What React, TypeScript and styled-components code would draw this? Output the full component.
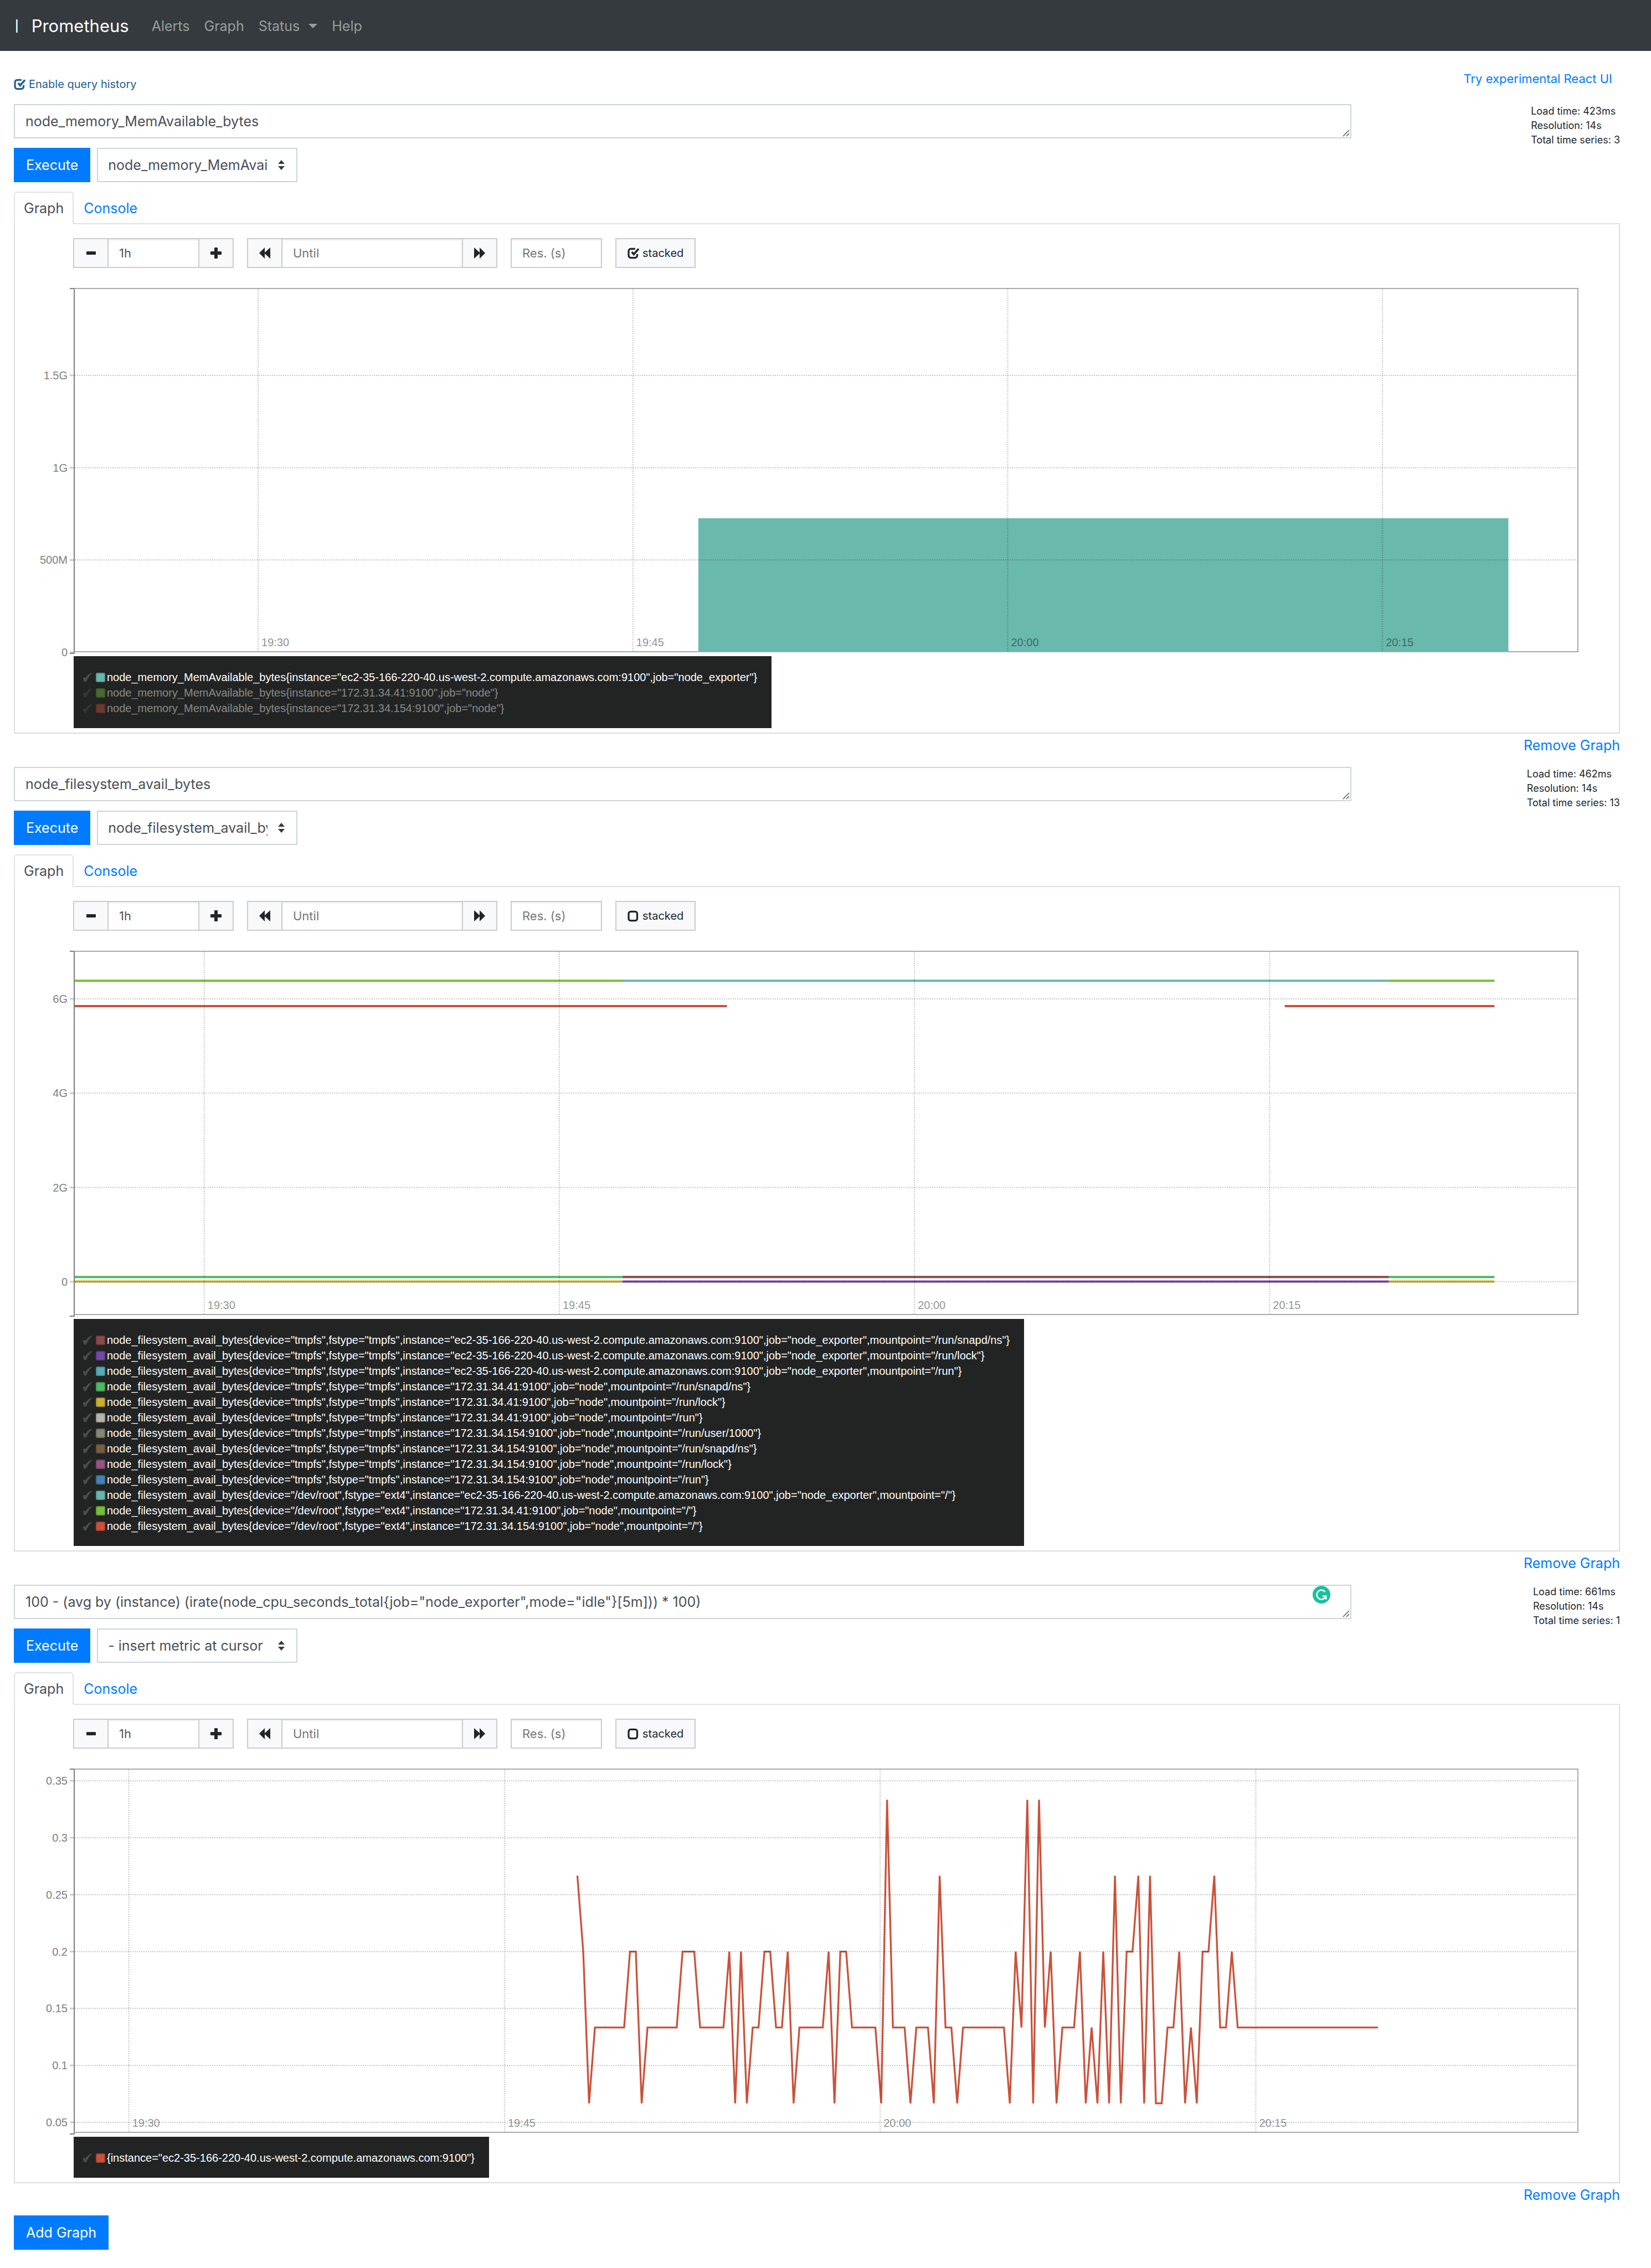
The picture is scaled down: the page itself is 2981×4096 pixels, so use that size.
import React, { useState } from "react";
import styled, { createGlobalStyle } from "styled-components";

const UI = `Inter, Roboto, "Liberation Sans", sans-serif`;
const CHART = `"Liberation Sans", Arial, sans-serif`;

const Global = createGlobalStyle`
  * { box-sizing: border-box; }
  body {
    margin: 0;
    background: #fff;
    color: #212529;
    font-family: ${UI};
    font-size: 25px;
    line-height: 38px;
  }
  button, input, select, textarea { font: inherit; border-radius: 0; margin: 0; }
  a { color: #007bff; text-decoration: none; }
`;

/* ---------- navigation ---------- */

const Navbar = styled.nav`
  display: flex;
  align-items: center;
  height: 92px;
  padding: 2px 26px 0;
  background: #343a3e;
`;

const ConsoleMark = styled.a`
  margin-right: 22px;
  color: #fff;
  font-size: 33px;
  font-weight: 300;
`;

const Brand = styled.a`
  margin-right: 28px;
  color: #fff;
  font-size: 31px;
`;

const NavLink = styled.a`
  display: flex;
  align-items: center;
  gap: 16px;
  padding: 0 13px;
  color: rgba(255, 255, 255, 0.5);
`;

const Caret = styled.span`
  border: 8px solid transparent;
  border-top-color: currentColor;
  border-bottom: 0;
`;

/* ---------- page ---------- */

const Page = styled.main`
  padding: 0 56px 34px 25px;
`;

const TopRow = styled.header`
  display: flex;
  justify-content: space-between;
  align-items: flex-start;
  height: 96px;
  padding: 32px 14px 0 0;
`;

const TopLink = styled.a`
  font-size: 22px;
  line-height: 36px;
`;

const CheckLabel = styled.label`
  position: relative;
  display: inline-flex;
  align-items: center;
  gap: 5px;
  font-size: 20px;
  line-height: 36px;
`;

const HistoryLabel = styled(CheckLabel)`
  margin-top: 10px;
  color: #22608f;
`;

const HiddenCheck = styled.input`
  position: absolute;
  inset: 0;
  opacity: 0;
`;

const GraphList = styled.div`
  display: flex;
  flex-direction: column;
  gap: 19px;
`;

const Query = styled.div`
  display: grid;
  grid-template-columns: 5fr 1fr;
  gap: 2px;
`;

const QueryForm = styled.div`
  display: flex;
  flex-direction: column;
  gap: 17px;
`;

const ExpressionBox = styled.div`
  position: relative;
  display: flex;
`;

const Expression = styled.textarea`
  flex: 1;
  height: 62px;
  padding: 10px 19px;
  border: 2px solid #ced4da;
  color: #495057;
  background: #fff;
  resize: none;
  overflow: hidden;
`;

const ResizeGrip = styled.svg`
  position: absolute;
  right: 3px;
  bottom: 3px;
`;

const WritingBadge = styled.svg`
  position: absolute;
  right: 38px;
  top: 2px;
`;

const ExecuteRow = styled.div`
  display: flex;
  gap: 12px;
`;

const PrimaryButton = styled.button`
  height: 62px;
  padding: 0 22px;
  border: 0;
  background: #007bff;
  color: #fff;
`;

const MetricPicker = styled.div`
  position: relative;
  display: flex;
  width: 362px;
`;

const MetricSelect = styled.select`
  appearance: none;
  width: 100%;
  height: 62px;
  padding: 0 52px 0 18px;
  border: 2px solid #ced4da;
  background: #fff;
  color: #495057;
`;

const SelectArrows = styled.svg`
  position: absolute;
  right: 22px;
  top: 22px;
  pointer-events: none;
`;

const Stats = styled.div`
  justify-self: end;
  font-size: 18px;
  line-height: 26px;
`;

const Tabs = styled.div`
  display: flex;
  margin-top: 17px;
  height: 59px;
  border-bottom: 2px solid #dee2e6;
`;

const Tab = styled.button<{ $active?: boolean }>`
  height: 59px;
  padding: 0 16px;
  border-style: solid;
  border-width: 2px;
  border-color: ${(p) => (p.$active ? "#dee2e6 #dee2e6 #fff" : "transparent")};
  border-radius: 6px 6px 0 0;
  background: ${(p) => (p.$active ? "#fff" : "transparent")};
  color: ${(p) => (p.$active ? "#495057" : "#007bff")};
`;

const Pane = styled.div`
  padding: 25px 73px 8px 0;
  border: 2px solid #ddd;
  border-top: 0;
`;

const Controls = styled.div`
  display: flex;
  gap: 24px;
  margin: 0 0 36px 105px;
`;

const InputGroup = styled.div`
  display: flex;
`;

const IconButton = styled.button`
  display: flex;
  align-items: center;
  justify-content: center;
  width: 64px;
  height: 54px;
  padding: 0;
  border: 2px solid #ccc;
  background: #f8f9fb;
  color: #212529;
`;

const TextInput = styled.input<{ $width: number; $grouped?: boolean }>`
  width: ${(p) => p.$width}px;
  height: 54px;
  margin: 0 ${(p) => (p.$grouped ? -2 : 0)}px;
  padding: 0 19px;
  border: 2px solid #ccc;
  box-shadow: inset 0 2px 2px rgba(0, 0, 0, 0.075);
  color: #555;
  font-size: 22px;
  &::placeholder { color: #777; opacity: 1; }
`;

const StackedLabel = styled(CheckLabel)`
  height: 54px;
  padding: 0 20px;
  border: 2px solid #ccc;
  background: #f8f9fb;
  color: #212529;
`;

const Chart = styled.div`
  display: grid;
  grid-template-columns: 106px 1fr;
`;

const AxisSvg = styled.svg`
  width: 106px;
  height: 658px;
  overflow: visible;
  font-family: ${CHART};
  font-size: 20px;
  fill: #808080;
`;

const Plot = styled.div`
  height: 658px;
  border: 2px solid #aaa;
  border-left-color: #7d7d7d;
`;

const PlotSvg = styled.svg`
  display: block;
  width: 100%;
  height: 100%;
  overflow: visible;
  font-family: ${CHART};
  font-size: 20px;
`;

const Legend = styled.ul`
  display: table;
  margin: 7px 0 0 106px;
  padding: 24px 26px 22px 16px;
  background: #222423;
  color: #fff;
  list-style: none;
  font-family: ${CHART};
  font-size: 20px;
  line-height: 28px;
`;

const LegendItem = styled.li<{ $off?: boolean }>`
  display: flex;
  align-items: center;
  height: 28px;
  white-space: nowrap;
  opacity: ${(p) => (p.$off ? 0.45 : 1)};
`;

const Tick = styled.svg`
  width: 18px;
  height: 18px;
  margin-right: 6px;
  fill: #4c4d4c;
`;

const Swatch = styled.span<{ $color: string }>`
  width: 17px;
  height: 17px;
  margin-right: 3px;
  border: 2px solid rgba(0, 0, 0, 0.18);
  border-radius: 3px;
  background: ${(p) => p.$color};
`;

const RemoveRow = styled.div`
  display: flex;
  align-items: center;
  justify-content: flex-end;
  height: 41px;
`;

const AddButton = styled(PrimaryButton)`
  margin-top: 17px;
`;

/* ---------- icons ---------- */

const CheckGlyph = ({ checked }: { checked: boolean }) => (
  <svg width="22" height="21" viewBox="0 0 27 25" fill="none" stroke="currentColor" strokeWidth="4">
    {checked ? (
      <>
        <path d="M17 2.5H7.5a5 5 0 0 0-5 5v10a5 5 0 0 0 5 5h9a5 5 0 0 0 5-5V14" />
        <path d="M9.5 9.5l4.5 5L24.5 2.5" strokeWidth="4.5" />
      </>
    ) : (
      <rect x="2.5" y="2.5" width="19" height="20" rx="4.5" />
    )}
  </svg>
);

const MinusGlyph = () => (
  <svg width="17" height="6"><rect width="17" height="6" rx="1" fill="currentColor" /></svg>
);

const PlusGlyph = () => (
  <svg width="20" height="20" fill="currentColor">
    <rect y="7" width="20" height="6" rx="1" />
    <rect x="7" width="6" height="20" rx="1" />
  </svg>
);

const SeekGlyph = ({ forward }: { forward?: boolean }) => (
  <svg width="20" height="20" viewBox="0 0 20 20" fill="currentColor">
    <path d={forward ? "M0 0l10 9V0l10 10L10 20v-9L0 20z" : "M20 0l-10 9V0L0 10l10 10v-9l10 9z"} />
  </svg>
);

const LegendTick = () => (
  <Tick viewBox="0 0 18 18">
    <path d="M1 11C1 9 4 8 5 11C8 6 12 2 18 1C13 6 9 11 7 16C6 18 3 18 2 15Z" />
  </Tick>
);

/* ---------- charts ---------- */

type Series = { color: string; from: number; to: number; value: number };
type ChartSpec = {
  span: number;
  offset: number;
  min: number;
  max: number;
  yTicks: { value: number; label: string }[];
  area?: Series;
  lines?: Series[];
  wave?: { color: string; start: number; step: number; values: number[] };
};

const X_TICKS = ["19:30", "19:45", "20:00", "20:15"];

const ChartView = ({ spec }: { spec: ChartSpec }) => {
  const x = (t: number) => ((t + spec.offset) / spec.span) * 100;
  const y = (v: number) => ((spec.max - v) / (spec.max - spec.min)) * 100;
  const px = (v: number) => 2 + (y(v) / 100) * 654;
  return (
    <Chart>
      <AxisSvg>
        {spec.yTicks.map((t) => (
          <g key={t.label}>
            <text x="95" y={px(t.value)} dy="7" textAnchor="end">{t.label}</text>
            <line x1="99" x2="106" y1={px(t.value)} y2={px(t.value)} stroke="#ccc" strokeWidth="3" />
          </g>
        ))}
        <path d="M99 1H107V660H99" fill="none" stroke="#7d7d7d" strokeWidth="2" />
      </AxisSvg>
      <Plot>
        <PlotSvg>
          {spec.area && (
            <rect
              x={`${x(spec.area.from)}%`}
              y={`${y(spec.area.value)}%`}
              width={`${x(spec.area.to) - x(spec.area.from)}%`}
              height={`${100 - y(spec.area.value)}%`}
              fill={spec.area.color}
            />
          )}
          {spec.lines?.map((s, i) => (
            <line
              key={i}
              x1={`${x(s.from)}%`}
              x2={`${x(s.to)}%`}
              y1={`${y(s.value)}%`}
              y2={`${y(s.value)}%`}
              stroke={s.color}
              strokeWidth="4"
            />
          ))}
          {spec.wave && (
            <svg width="100%" height="100%" viewBox="0 0 100 100" preserveAspectRatio="none">
              <polyline
                points={spec.wave.values
                  .map((v, i) => `${x(spec.wave!.start + i * spec.wave!.step)},${y(v)}`)
                  .join(" ")}
                fill="none"
                stroke={spec.wave.color}
                strokeWidth="3.3"
                vectorEffect="non-scaling-stroke"
              />
            </svg>
          )}
          <g stroke="#000" strokeOpacity="0.22" strokeWidth="2" strokeDasharray="2 2">
            {spec.yTicks.filter((t) => y(t.value) < 100).map((t) => (
              <line key={t.label} x1="0" x2="100%" y1={`${y(t.value)}%`} y2={`${y(t.value)}%`} />
            ))}
            {X_TICKS.map((label, i) => (
              <line key={label} x1={`${x(i * 15)}%`} x2={`${x(i * 15)}%`} y1="0" y2="100%" />
            ))}
          </g>
          {X_TICKS.map((label, i) => (
            <text key={label} x={`${x(i * 15)}%`} y="100%" dx="6" dy="-9" fill="#000" fillOpacity="0.45">
              {label}
            </text>
          ))}
        </PlotSvg>
      </Plot>
    </Chart>
  );
};

/* ---------- data ---------- */

const memoryChart: ChartSpec = {
  span: 60.14,
  offset: 7.34,
  min: 0.006,
  max: 1.968,
  yTicks: [
    { value: 1.5, label: "1.5G" },
    { value: 1, label: "1G" },
    { value: 0.5, label: "500M" },
    { value: 0, label: "0" },
  ],
  area: { color: "#69b9ad", from: 17.62, to: 50.04, value: 0.726 },
};

const diskChart: ChartSpec = {
  span: 63.47,
  offset: 5.47,
  min: -0.683,
  max: 6.997,
  yTicks: [
    { value: 6, label: "6G" },
    { value: 4, label: "4G" },
    { value: 2, label: "2G" },
    { value: 0, label: "0" },
  ],
  lines: [
    { color: "#73c03a", from: -5.47, to: 17.67, value: 6.383 },
    { color: "#65b9ac", from: 17.67, to: 50.04, value: 6.383 },
    { color: "#73c03a", from: 50.04, to: 54.5, value: 6.383 },
    { color: "#cb513a", from: -5.47, to: 22.08, value: 5.845 },
    { color: "#cb513a", from: 45.64, to: 54.5, value: 5.845 },
    { color: "#4cb963", from: -5.47, to: 17.67, value: 0.1 },
    { color: "#8a4a4d", from: 17.67, to: 50.04, value: 0.1 },
    { color: "#4cb963", from: 50.04, to: 54.5, value: 0.1 },
    { color: "#cbb034", from: -5.47, to: 17.67, value: 0.005 },
    { color: "#7349a8", from: 17.67, to: 50.04, value: 0.005 },
    { color: "#cbb034", from: 50.04, to: 54.5, value: 0.005 },
  ],
};

const LEVELS: Record<string, number> = {
  D: 1 / 15,
  C: 2 / 15,
  B: 3 / 15,
  A: 4 / 15,
  E: 5 / 15,
};

const CPU_SAMPLES = [
  "ABDCCCCCCBBD",
  "CCCCCCBBBCCCCC",
  "BDBDCCBBCCBD",
  "CCCCCBDBBCCCCC",
  "DECCCDCCCDACCD",
  "CCCCCCCC",
  "DBCEDECBDCCCBDCDBDAD",
  "BBADADDCCBDCDBBACCB",
  "C".repeat(25),
].join("");

const cpuChart: ChartSpec = {
  span: 60,
  offset: 2.16,
  min: 0.0417,
  max: 0.3598,
  yTicks: [0.35, 0.3, 0.25, 0.2, 0.15, 0.1, 0.05].map((value) => ({ value, label: String(value) })),
  wave: {
    color: "#cb513a",
    start: 17.91,
    step: 14 / 60,
    values: CPU_SAMPLES.split("").map((c) => LEVELS[c]),
  },
};

type LegendEntry = { color: string; text: string; off?: boolean };
type GraphSpec = {
  id: string;
  expression: string;
  metric: string;
  stats: string[];
  stacked: boolean;
  badge?: boolean;
  chart: ChartSpec;
  legend: LegendEntry[];
};

const EC2 = "ec2-35-166-220-40.us-west-2.compute.amazonaws.com:9100";
const mem = (instance: string, job: string) =>
  `node_memory_MemAvailable_bytes{instance="${instance}",job="${job}"}`;
const fs = (device: string, type: string, instance: string, job: string, mount: string) =>
  `node_filesystem_avail_bytes{device="${device}",fstype="${type}",instance="${instance}",job="${job}",mountpoint="${mount}"}`;

const GRAPHS: GraphSpec[] = [
  {
    id: "memory",
    expression: "node_memory_MemAvailable_bytes",
    metric: "node_memory_MemAvailable_bytes",
    stats: ["Load time: 423ms", "Resolution: 14s", "Total time series: 3"],
    stacked: true,
    chart: memoryChart,
    legend: [
      { color: "#65b9ac", text: mem(EC2, "node_exporter") },
      { color: "#73c03a", text: mem("172.31.34.41:9100", "node"), off: true },
      { color: "#cb513a", text: mem("172.31.34.154:9100", "node"), off: true },
    ],
  },
  {
    id: "disk",
    expression: "node_filesystem_avail_bytes",
    metric: "node_filesystem_avail_bytes",
    stats: ["Load time: 462ms", "Resolution: 14s", "Total time series: 13"],
    stacked: false,
    chart: diskChart,
    legend: [
      { color: "#8a4a4d", text: fs("tmpfs", "tmpfs", EC2, "node_exporter", "/run/snapd/ns") },
      { color: "#7349a8", text: fs("tmpfs", "tmpfs", EC2, "node_exporter", "/run/lock") },
      { color: "#55a9b9", text: fs("tmpfs", "tmpfs", EC2, "node_exporter", "/run") },
      { color: "#4cb963", text: fs("tmpfs", "tmpfs", "172.31.34.41:9100", "node", "/run/snapd/ns") },
      { color: "#cbb034", text: fs("tmpfs", "tmpfs", "172.31.34.41:9100", "node", "/run/lock") },
      { color: "#b5b6a9", text: fs("tmpfs", "tmpfs", "172.31.34.41:9100", "node", "/run") },
      { color: "#858772", text: fs("tmpfs", "tmpfs", "172.31.34.154:9100", "node", "/run/user/1000") },
      { color: "#785f43", text: fs("tmpfs", "tmpfs", "172.31.34.154:9100", "node", "/run/snapd/ns") },
      { color: "#96557e", text: fs("tmpfs", "tmpfs", "172.31.34.154:9100", "node", "/run/lock") },
      { color: "#4682b4", text: fs("tmpfs", "tmpfs", "172.31.34.154:9100", "node", "/run") },
      { color: "#65b9ac", text: fs("/dev/root", "ext4", EC2, "node_exporter", "/") },
      { color: "#73c03a", text: fs("/dev/root", "ext4", "172.31.34.41:9100", "node", "/") },
      { color: "#cb513a", text: fs("/dev/root", "ext4", "172.31.34.154:9100", "node", "/") },
    ],
  },
  {
    id: "cpu",
    expression:
      '100 - (avg by (instance) (irate(node_cpu_seconds_total{job="node_exporter",mode="idle"}[5m])) * 100)',
    metric: "- insert metric at cursor -",
    stats: ["Load time: 661ms", "Resolution: 14s", "Total time series: 1"],
    stacked: false,
    badge: true,
    chart: cpuChart,
    legend: [{ color: "#cb513a", text: `{instance="${EC2}"}` }],
  },
];

/* ---------- graph block ---------- */

const GraphBlock = ({ graph }: { graph: GraphSpec }) => {
  const [stacked, setStacked] = useState(graph.stacked);
  return (
    <section>
      <Query>
        <QueryForm>
          <ExpressionBox>
            <Expression aria-label="Expression" rows={1} spellCheck={false} defaultValue={graph.expression} />
            {graph.badge && (
              <WritingBadge width="32" height="32" viewBox="0 0 32 32">
                <circle cx="16" cy="16" r="16" fill="#15c39a" />
                <path
                  d="M22.6 11.2A8.3 8.3 0 1 0 23.8 18.6H18M24.2 18v6.8"
                  fill="none"
                  stroke="#fff"
                  strokeWidth="2.6"
                />
              </WritingBadge>
            )}
            <ResizeGrip width="13" height="13" stroke="#555" strokeWidth="1.5">
              <path d="M1 12L12 1M7 12l5-5" />
            </ResizeGrip>
          </ExpressionBox>
          <ExecuteRow>
            <PrimaryButton type="button">Execute</PrimaryButton>
            <MetricPicker>
              <MetricSelect aria-label="Metric" defaultValue={graph.metric}>
                <option>{graph.metric}</option>
              </MetricSelect>
              <SelectArrows width="14" height="18" fill="#343a40">
                <path d="M7 0l6 7H1zM7 18l6-7H1z" />
              </SelectArrows>
            </MetricPicker>
          </ExecuteRow>
        </QueryForm>
        <Stats>
          {graph.stats.map((line) => (
            <div key={line}>{line}</div>
          ))}
        </Stats>
      </Query>
      <Tabs role="tablist">
        <Tab $active type="button" role="tab" aria-selected="true">Graph</Tab>
        <Tab type="button" role="tab" aria-selected="false">Console</Tab>
      </Tabs>
      <Pane>
        <Controls>
          <InputGroup>
            <IconButton type="button" aria-label="Shrink range"><MinusGlyph /></IconButton>
            <TextInput $grouped $width={166} aria-label="Range" defaultValue="1h" />
            <IconButton type="button" aria-label="Grow range"><PlusGlyph /></IconButton>
          </InputGroup>
          <InputGroup>
            <IconButton type="button" aria-label="Earlier"><SeekGlyph /></IconButton>
            <TextInput $grouped $width={328} aria-label="End time" placeholder="Until" />
            <IconButton type="button" aria-label="Later"><SeekGlyph forward /></IconButton>
          </InputGroup>
          <TextInput $width={165} aria-label="Resolution" placeholder="Res. (s)" />
          <StackedLabel>
            <HiddenCheck type="checkbox" checked={stacked} onChange={() => setStacked(!stacked)} />
            <CheckGlyph checked={stacked} />
            stacked
          </StackedLabel>
        </Controls>
        <ChartView spec={graph.chart} />
        <Legend>
          {graph.legend.map((entry) => (
            <LegendItem key={entry.text} $off={entry.off}>
              <LegendTick />
              <Swatch $color={entry.color} />
              {entry.text}
            </LegendItem>
          ))}
        </Legend>
      </Pane>
      <RemoveRow>
        <a href="#remove">Remove Graph</a>
      </RemoveRow>
    </section>
  );
};

export default function App() {
  const [history, setHistory] = useState(true);
  return (
    <>
      <Global />
      <Navbar>
        <ConsoleMark href="#consoles">I</ConsoleMark>
        <Brand href="#home">Prometheus</Brand>
        <NavLink href="#alerts">Alerts</NavLink>
        <NavLink href="#graph">Graph</NavLink>
        <NavLink href="#status">Status<Caret /></NavLink>
        <NavLink href="#help">Help</NavLink>
      </Navbar>
      <Page>
        <TopRow>
          <HistoryLabel>
            <HiddenCheck type="checkbox" checked={history} onChange={() => setHistory(!history)} />
            <CheckGlyph checked={history} />
            Enable query history
          </HistoryLabel>
          <TopLink href="#new">Try experimental React UI</TopLink>
        </TopRow>
        <GraphList>
          {GRAPHS.map((graph) => (
            <GraphBlock key={graph.id} graph={graph} />
          ))}
        </GraphList>
        <AddButton type="button">Add Graph</AddButton>
      </Page>
    </>
  );
}
